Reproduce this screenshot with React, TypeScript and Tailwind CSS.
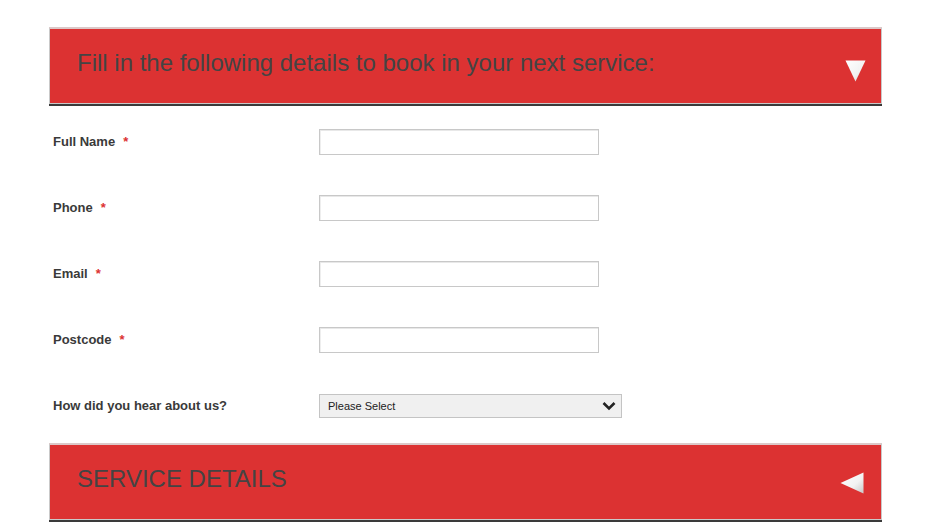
import React from "react";

function DownTri() {
  return (
    <svg width="21" height="22" viewBox="0 0 21 22">
      <defs>
        <linearGradient id="gd" x1="0" y1="0" x2="1" y2="1">
          <stop offset="0" stopColor="#ffffff" />
          <stop offset="0.6" stopColor="#f2f2f2" />
          <stop offset="1" stopColor="#c8c8c8" />
        </linearGradient>
      </defs>
      <polygon points="0.5,0.5 20.5,0.5 10.5,21.5" fill="url(#gd)" />
    </svg>
  );
}

function LeftTri() {
  return (
    <svg width="24" height="22" viewBox="0 0 24 22">
      <defs>
        <linearGradient id="gl" x1="0" y1="0" x2="1" y2="1">
          <stop offset="0" stopColor="#ffffff" />
          <stop offset="0.6" stopColor="#f2f2f2" />
          <stop offset="1" stopColor="#c8c8c8" />
        </linearGradient>
      </defs>
      <polygon points="0.5,11 23.5,0.5 23.5,21.5" fill="url(#gl)" />
    </svg>
  );
}

function Panel({ title, icon, iconClass }: { title: string; icon: React.ReactNode; iconClass: string }) {
  return (
    <div className="border-b-2 border-[#3a3a3a]">
      <div className="border border-[#c9c9c9] border-t-2 border-t-[#dcc8c8]">
        <div className="relative h-[74px] bg-[#dc3232] pl-[27px] pt-[20px]">
          <div className="text-[24px] leading-[28px] text-[#444444]">{title}</div>
          <div className={"absolute " + iconClass}>{icon}</div>
        </div>
      </div>
    </div>
  );
}

function Row({ label, required, children }: { label: string; required?: boolean; children: React.ReactNode }) {
  return (
    <div className="flex h-[66px] items-center">
      <div className="w-[270px] pl-[4px] text-[13px] font-bold text-[#3a3a3a]">
        {label}
        {required && <span className="ml-[8px] text-[#dc3232]">*</span>}
      </div>
      {children}
    </div>
  );
}

function TextBox() {
  return (
    <div className="h-[26px] w-[280px] border border-[#c8c8c8] bg-white shadow-[inset_0_1px_0_0_#e8e8e8,inset_1px_0_0_0_#eeeeee]" />
  );
}

export default function App() {
  return (
    <div className="min-h-[523px] bg-white pt-[27px] font-['Liberation_Sans',Arial,sans-serif]">
      <div className="ml-[49px] w-[833px]">
        <Panel title="Fill in the following details to book in your next service:" icon={<DownTri />} iconClass="left-[795px] top-[31px]" />
        <div className="pt-[3px]">
          <Row label="Full Name" required>
            <TextBox />
          </Row>
          <Row label="Phone" required>
            <TextBox />
          </Row>
          <Row label="Email" required>
            <TextBox />
          </Row>
          <Row label="Postcode" required>
            <TextBox />
          </Row>
          <Row label="How did you hear about us?">
            <div className="flex h-[24px] w-[303px] items-center justify-between border border-[#c4c4c4] bg-[#f0f0f0] pl-[8px] pr-[5px]">
              <span className="text-[11px] text-[#222222]">Please Select</span>
              <svg width="14" height="10" viewBox="0 0 14 10">
                <path d="M1.5 2 L7 7.5 L12.5 2" fill="none" stroke="#222" strokeWidth="2.6" />
              </svg>
            </div>
          </Row>
        </div>
        <div className="pt-[4px]">
          <Panel title="SERVICE DETAILS" icon={<LeftTri />} iconClass="left-[790px] top-[27px]" />
        </div>
      </div>
    </div>
  );
}
